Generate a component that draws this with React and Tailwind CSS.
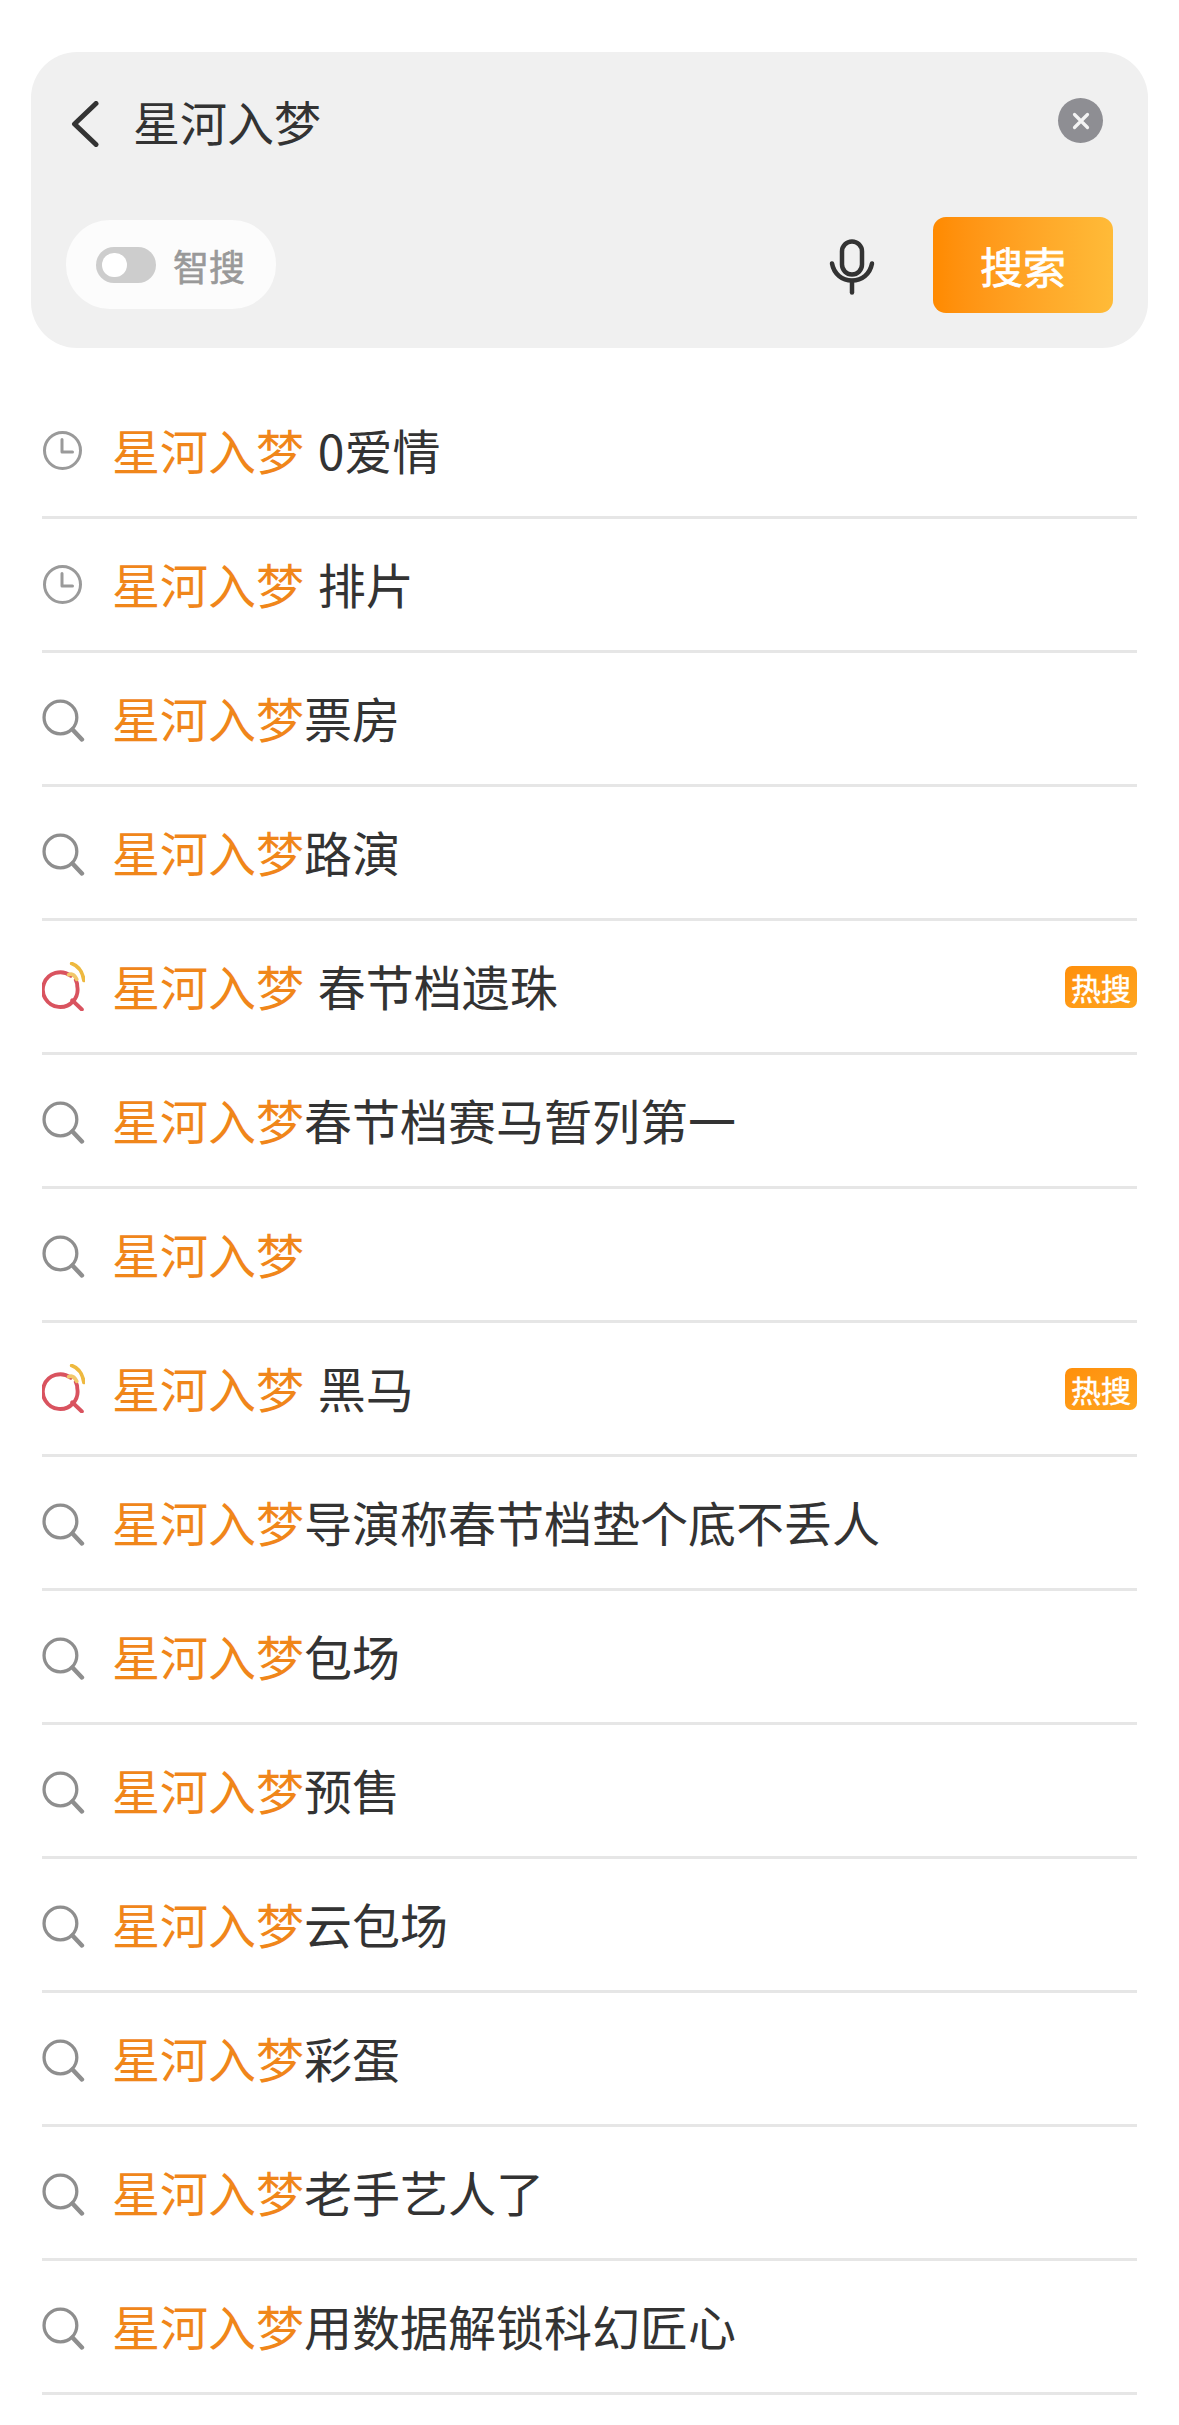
import React from 'react';

const cjk = { fontFamily: '"Noto Sans CJK SC", "Noto Sans", sans-serif' };

const ClockIcon = () => (
  <svg width="41" height="41" viewBox="0 0 41 41" fill="none" stroke="#9a9a9a" strokeWidth="3">
    <circle cx="20.5" cy="20.5" r="18" />
    <path d="M20 9.5V22H30.5" strokeLinecap="round" strokeLinejoin="round" />
  </svg>
);

const SearchIcon = () => (
  <svg width="43" height="43" viewBox="0 0 42 42" fill="none" stroke="#8e8e8e" strokeWidth="3.2" className="mt-[3px]">
    <circle cx="18" cy="18" r="16" />
    <path d="M30 30L39 39.5" strokeWidth="4.4" strokeLinecap="round" />
  </svg>
);

const HotIcon = () => (
  <svg width="43" height="49" viewBox="0 0 42 48" fill="none" strokeLinecap="round" className="-mt-[1px]">
    <path d="M28 13.5A17 17 0 1 0 34.500 24C34.500 21.500 34 19.500 33 17.500" stroke="#d9535f" strokeWidth="3.800" />
    <path d="M29.500 37.500L39 46.500" stroke="#d9535f" strokeWidth="3.800" />
    <path d="M26 12.500C29 11 32 13 34 17" stroke="#f2c76a" strokeWidth="3.600" />
    <path d="M29 1.500C35 3.500 39.500 8.500 41 18" stroke="#eeb93f" strokeWidth="3.600" />
  </svg>
);

const icons = { clock: ClockIcon, search: SearchIcon, hot: HotIcon };

const rows = [
  { icon: 'clock', rest: ' 0爱情' },
  { icon: 'clock', rest: ' 排片' },
  { icon: 'search', rest: '票房' },
  { icon: 'search', rest: '路演' },
  { icon: 'hot', rest: ' 春节档遗珠', hot: true },
  { icon: 'search', rest: '春节档赛马暂列第一' },
  { icon: 'search', rest: '' },
  { icon: 'hot', rest: ' 黑马', hot: true },
  { icon: 'search', rest: '导演称春节档垫个底不丢人' },
  { icon: 'search', rest: '包场' },
  { icon: 'search', rest: '预售' },
  { icon: 'search', rest: '云包场' },
  { icon: 'search', rest: '彩蛋' },
  { icon: 'search', rest: '老手艺人了' },
  { icon: 'search', rest: '用数据解锁科幻匠心' },
];

const Row = ({ item }) => {
  const Icon = icons[item.icon];
  return (
    <div className="h-[134px] flex items-center border-b-[3px] border-[#e6e6e6]">
      <div className="w-[70px] shrink-0 flex items-center">
        <Icon />
      </div>
      <div className="flex-1 pb-[4px] text-[48px] leading-none whitespace-pre [word-spacing:3px]">
        <span className="text-[#f0861a]">星河入梦</span>
        <span className="text-[#333333]">{item.rest}</span>
      </div>
      {item.hot && (
        <span className="w-[72px] h-[42px] rounded-[7px] bg-gradient-to-br from-[#ff8f0a] to-[#ffa51e] text-white text-[30px] leading-none [-webkit-text-stroke:0.5px_white] flex items-center justify-center">
          热搜
        </span>
      )}
    </div>
  );
};

export default function App() {
  return (
    <div className="min-h-screen bg-white pt-[52px]" style={cjk}>
      <div className="mx-[31px] h-[296px] rounded-[46px] bg-[#f0f0f0] px-[35px] pt-[46px] pb-[35px] flex flex-col justify-between">
        <div className="flex items-center h-[45px]">
          <svg width="28" height="46" viewBox="0 0 28 46" fill="none" stroke="#333333" strokeWidth="5" className="ml-[5px] mt-[6px]">
            <path d="M25 2.500L3.500 23L25 43.500" strokeLinecap="round" strokeLinejoin="round" />
          </svg>
          <span className="ml-[34px] text-[47px] leading-none text-[#333333]">星河入梦</span>
          <div className="ml-auto mr-[10px] w-[45px] h-[45px] rounded-full bg-[#8e8e93] flex items-center justify-center">
            <svg width="18" height="18" viewBox="0 0 18 18" fill="none" stroke="#f4f4f4" strokeWidth="3.200" strokeLinecap="round">
              <path d="M2.500 2.500L15.500 15.500M15.500 2.500L2.500 15.500" />
            </svg>
          </div>
        </div>
        <div className="flex items-center h-[96px]">
          <div className="w-[210px] h-[89px] -mt-[1px] rounded-[44px] bg-[#fcfcfc] flex items-center pl-[30px]">
            <div className="w-[60px] h-[36px] rounded-full bg-[#cdcdcd] p-[6px]">
              <div className="w-[25px] h-[24px] rounded-full bg-white" />
            </div>
            <span className="ml-[17px] text-[36px] leading-none text-[#999999] [-webkit-text-stroke:0.6px_#999999]">智搜</span>
          </div>
          <svg width="46" height="56" viewBox="0 0 46 56" fill="none" stroke="#333333" strokeWidth="4.500" strokeLinecap="round" className="ml-auto mr-[58px] mt-[4px]">
            <rect x="13" y="2.500" width="20" height="33" rx="10" />
            <path d="M3 24.500C5 35 13 41.500 23 41.500C33 41.500 41 35 43 24.500" />
            <path d="M23 42V53.500" />
          </svg>
          <div className="w-[180px] h-[96px] rounded-[13px] bg-gradient-to-r from-[#ff8a00] to-[#ffbb38] text-white text-[43px] leading-none [-webkit-text-stroke:0.7px_white] flex items-center justify-center">
            搜索
          </div>
        </div>
      </div>
      <div className="mt-[37px] ml-[42px] mr-[42px]">
        {rows.map((item, idx) => (
          <Row key={idx} item={item} />
        ))}
      </div>
    </div>
  );
}
